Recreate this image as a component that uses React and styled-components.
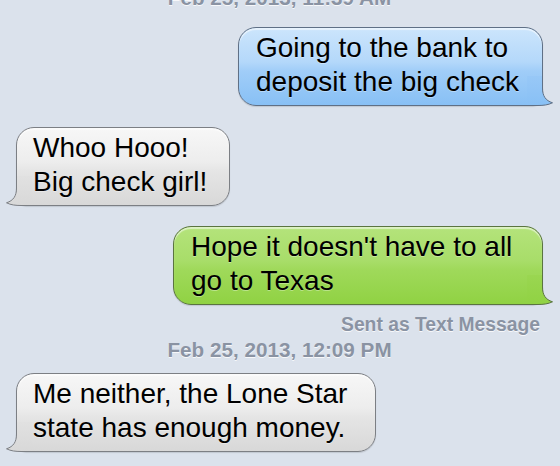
import React, { useId } from "react";
import styled, { createGlobalStyle } from "styled-components";

const GlobalStyle = createGlobalStyle`
  html, body {
    margin: 0;
    padding: 0;
    background: #dbe2ec;
  }
`;

const tones = {
  blue: {
    top: "#cce5fc",
    mid1: "#b4d8fa",
    mid2: "#a0cdf8",
    bottom: "#88c0f5",
    tailTop: "#98c8f7",
    border: "#5f7086",
  },
  green: {
    top: "#b4e37b",
    mid1: "#a8dd69",
    mid2: "#9fd95a",
    bottom: "#90d243",
    tailTop: "#9ad651",
    border: "#5a7440",
  },
  gray: {
    top: "#f7f7f7",
    mid1: "#ededed",
    mid2: "#e5e5e5",
    bottom: "#d8d8d8",
    tailTop: "#e1e1e1",
    border: "#7c7f84",
  },
};

export default function App() {
  return (
    <>
      <GlobalStyle />
      <Thread>
        <Stamp $gap={-14}>Feb 25, 2013, 11:39 AM</Stamp>

        <Message $gap={17} $out tone="blue" width={305}>
          Going to the bank to
          <br />
          deposit the big check
        </Message>

        <Message $gap={21} tone="gray" width={214}>
          Whoo Hooo!
          <br />
          Big check girl!
        </Message>

        <Message $gap={20} $out tone="green" width={370}>
          Hope it doesn't have to all
          <br />
          go to Texas
        </Message>

        <Sent>Sent as Text Message</Sent>
        <Stamp $gap={2}>Feb 25, 2013, 12:09 PM</Stamp>

        <Message $gap={11} tone="gray" width={360}>
          Me neither, the Lone Star
          <br />
          state has enough money.
        </Message>
      </Thread>
    </>
  );
}

function Message({ $gap, $out, tone, width, children }) {
  const t = tones[tone];
  return (
    <Row $gap={$gap} $out={$out}>
      <Bubble $out={$out} $t={t} $w={width}>
        <Text>{children}</Text>
        <Tail $out={$out} t={t} />
      </Bubble>
    </Row>
  );
}

function Tail({ $out, t }) {
  const id = useId();
  return (
    <TailSvg $out={$out} viewBox="0 0 26 30">
      <defs>
        <linearGradient id={id} x1="0" y1="0" x2="0" y2="1">
          <stop offset="0" stopColor={t.tailTop} />
          <stop offset="1" stopColor={t.bottom} />
        </linearGradient>
      </defs>
      <path
        d="M0 0 H15.5 V12 C15.5 20 18.5 24.5 25.5 26.8 C21 29 16.5 29.5 11 29.5 H0 Z"
        fill={`url(#${id})`}
      />
      <path
        d="M15.5 0 V12 C15.5 20 18.5 24.5 25.5 26.8 C21 29 16.5 29.5 11 29.5 H0"
        fill="none"
        stroke={t.border}
        strokeWidth="1"
      />
    </TailSvg>
  );
}

const Thread = styled.div`
  width: 560px;
  height: 466px;
  overflow: hidden;
  box-sizing: border-box;
  padding: 0 17px 0 16px;
  display: flex;
  flex-direction: column;
  background: #dbe2ec;
  font-family: "Liberation Sans", Arial, sans-serif;
`;

const Stamp = styled.div`
  margin-top: ${(p) => p.$gap}px;
  text-align: center;
  font-weight: 700;
  font-size: 20.7px;
  line-height: 24px;
  color: #8a93a3;
  text-shadow: 0 1px 0 rgba(255, 255, 255, 0.8);
`;

const Sent = styled.div`
  align-self: flex-end;
  margin: 9px 3px 0 0;
  font-weight: 700;
  font-size: 19.3px;
  line-height: 22px;
  color: #8a93a3;
  text-shadow: 0 1px 0 rgba(255, 255, 255, 0.8);
`;

const Row = styled.div`
  display: flex;
  justify-content: ${(p) => (p.$out ? "flex-end" : "flex-start")};
  margin-top: ${(p) => p.$gap}px;
`;

const Bubble = styled.div`
  position: relative;
  box-sizing: border-box;
  width: ${(p) => p.$w}px;
  padding: 3px 0 6px ${(p) => (p.$out ? 17 : 16)}px;
  border: 1px solid ${(p) => p.$t.border};
  border-radius: 18px;
  ${(p) =>
    p.$out
      ? "border-bottom-right-radius: 10px;"
      : "border-bottom-left-radius: 10px;"}
  background: linear-gradient(
    to bottom,
    ${(p) => p.$t.top} 0%,
    ${(p) => p.$t.mid1} 44%,
    ${(p) => p.$t.mid2} 56%,
    ${(p) => p.$t.bottom} 100%
  );
  box-shadow: inset 0 2px 1px rgba(255, 255, 255, 0.55),
    0 1px 1px rgba(0, 0, 0, 0.12);
  font-size: 28px;
  line-height: 34px;
  color: #000;
  white-space: nowrap;
`;

const Text = styled.span`
  position: relative;
  z-index: 1;
  text-shadow: 0 1px 0 rgba(255, 255, 255, 0.35);
`;

const TailSvg = styled.svg`
  position: absolute;
  bottom: -1px;
  width: 26px;
  height: 30px;
  overflow: visible;
  ${(p) =>
    p.$out ? "right: -11px;" : "left: -11px; transform: scaleX(-1);"}
`;
